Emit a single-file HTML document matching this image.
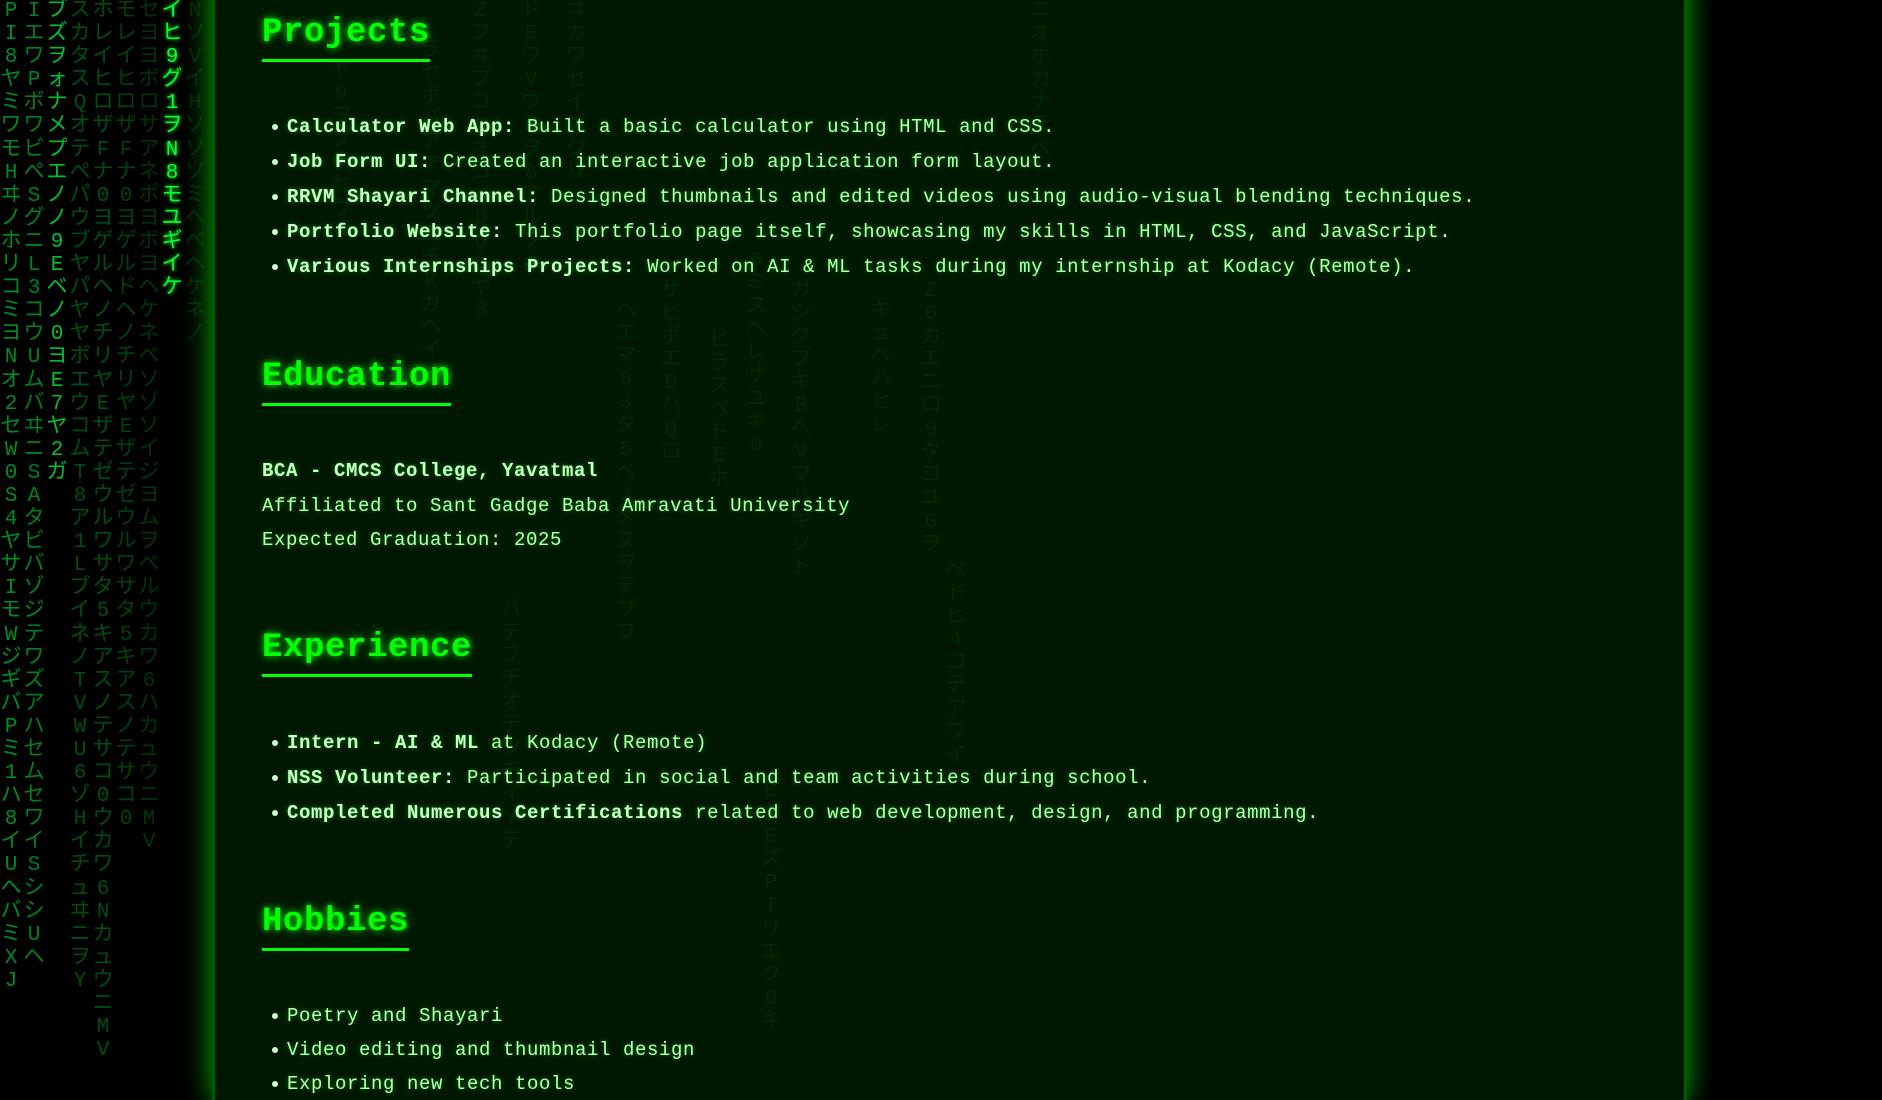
<!DOCTYPE html>
<html><head><meta charset="utf-8">
<style>
html,body{margin:0;padding:0;background:#000;width:1882px;height:1079px;overflow:hidden}
.rain{position:absolute;top:0;left:0;width:1882px;height:1079px;font-family:"Liberation Mono","Noto Sans CJK JP",monospace;font-size:21px;line-height:23.1px;color:#00ff41;}
.col{position:absolute;top:0;width:22px;word-break:break-all;white-space:normal;text-align:center}
.box{position:absolute;left:212px;top:-20px;width:1475px;height:1120px;background:rgba(0,24,0,0.95);box-shadow:0 0 26px #00b300;}
.box:before{content:"";position:absolute;left:0;top:0;bottom:0;width:3px;background:#005a00}
.box:after{content:"";position:absolute;right:0;top:0;bottom:0;width:3px;background:#005a00}
.content{position:absolute;left:262px;top:0;font-family:"Liberation Mono",monospace;color:#b8ffb8;font-size:19px;letter-spacing:0.6px}
h2{position:absolute;margin:0;font-size:34px;color:#00ff00;text-shadow:0 0 8px #00ff00;font-weight:bold;border-bottom:3px solid #00ff00;padding-bottom:8px;line-height:36px;letter-spacing:0.6px;white-space:nowrap}
.li{position:absolute;left:0;white-space:nowrap;text-shadow:0 0 4px rgba(0,255,0,.5)}
.li b{color:#ccffcc}
.dot{position:absolute;left:10px;width:6px;height:6px;border-radius:50%;background:#ccffcc}
.li span.t{position:absolute;left:25px;white-space:nowrap}
</style></head><body>
<div class="rain">
<div class="col" style="left:0;opacity:.55">PI8ヤミワモHヰノホリコミヨNオ2セW0S4ヤサIモWジギバPミ1ハ8イUヘバミXJ</div>
<div class="col" style="left:23px;opacity:.5">Iエワ PボワビペSグニL3コウUムバヰニSAタビバゾジテワズアハセムセワイSシシUヘ</div>
<div class="col" style="left:46px;opacity:.75">ブズヲォナメプエノノ9Eベノ0ヨE7ヤ2ガ</div>
<div class="col" style="left:69px;opacity:.3">スカタスQオテペパウブヤパヤヤボエウコ ムT8ア1LブイネノTVWU6ゾHイチュヰニヲY</div>
<div class="col" style="left:92px;opacity:.3">ホレイヒロザFナ0ヨゲルヘノチリヤEザテゼウルワサタ5キアスノテサコ0ウカワ6NカュウニMV</div>
<div class="col" style="left:115px;opacity:.25">モレイヒロザFナ0ヨゲルドヘノチリヤEザテゼウルワサタ5キアスノテサコ0</div>
<div class="col" style="left:138px;opacity:.2">セヨヨボロサアネポヨボヨヘケネベソゾソイジヨムヲベルウカワ6ハカュウニMV</div>
<div class="col" style="left:161px;opacity:1;text-shadow:0 0 4px #0f0">イヒ9グ1ヲN8モユギイケ</div>
<div class="col" style="left:184px;opacity:.15">NソVイHソソソミヘベヘケネノ</div>
</div>
<div class="box"></div>
<div class="rain" style="opacity:.08">
<div class="col" style="left:420px;top:40px">ラセボバアアマツムチKガヘイ</div>
<div class="col" style="left:470px;top:0">ZブヰプコヘオコイDQムヤ8</div>
<div class="col" style="left:520px;top:0">ドEワVウミヲ8アルフキ</div>
<div class="col" style="left:565px;top:0">ヰカワセイズジリ</div>
<div class="col" style="left:615px;top:300px">ヘエマ83タ5ベ3メヌヲテプフ</div>
<div class="col" style="left:660px;top:280px">ザビポエDハQロ</div>
<div class="col" style="left:708px;top:330px">ヒラスペドEホ</div>
<div class="col" style="left:745px;top:250px">6ミスヘレザユキ9</div>
<div class="col" style="left:790px;top:280px">ガシグブキBヘVマハキソト</div>
<div class="col" style="left:870px;top:300px">キュベハヒレ</div>
<div class="col" style="left:920px;top:280px">Z6カエニロ9タコユGヲ</div>
<div class="col" style="left:945px;top:560px">ベドヒ4コデアワイ</div>
<div class="col" style="left:500px;top:600px">パテフチオデツチイYテ</div>
<div class="col" style="left:760px;top:780px">BボEズPTリエクBキ</div>
<div class="col" style="left:330px;top:60px">ヤ9ヲプテセウ</div>
<div class="col" style="left:1030px;top:0">ニオホカナテベ</div>
</div>
<div class="content">
<h2 style="top:15px">Projects</h2>
<div class="li" style="top:116px"><i class="dot" style="top:8px"></i><span class="t"><b>Calculator Web App:</b> Built a basic calculator using HTML and CSS.</span></div>
<div class="li" style="top:151px"><i class="dot" style="top:8px"></i><span class="t"><b>Job Form UI:</b> Created an interactive job application form layout.</span></div>
<div class="li" style="top:186px"><i class="dot" style="top:8px"></i><span class="t"><b>RRVM Shayari Channel:</b> Designed thumbnails and edited videos using audio-visual blending techniques.</span></div>
<div class="li" style="top:221px"><i class="dot" style="top:8px"></i><span class="t"><b>Portfolio Website:</b> This portfolio page itself, showcasing my skills in HTML, CSS, and JavaScript.</span></div>
<div class="li" style="top:256px"><i class="dot" style="top:8px"></i><span class="t"><b>Various Internships Projects:</b> Worked on AI &amp; ML tasks during my internship at Kodacy (Remote).</span></div>

<h2 style="top:359px">Education</h2>
<div class="li" style="top:460px"><b>BCA - CMCS College, Yavatmal</b></div>
<div class="li" style="top:495px">Affiliated to Sant Gadge Baba Amravati University</div>
<div class="li" style="top:529px">Expected Graduation: 2025</div>

<h2 style="top:630px">Experience</h2>
<div class="li" style="top:732px"><i class="dot" style="top:8px"></i><span class="t"><b>Intern - AI &amp; ML</b> at Kodacy (Remote)</span></div>
<div class="li" style="top:767px"><i class="dot" style="top:8px"></i><span class="t"><b>NSS Volunteer:</b> Participated in social and team activities during school.</span></div>
<div class="li" style="top:802px"><i class="dot" style="top:8px"></i><span class="t"><b>Completed Numerous Certifications</b> related to web development, design, and programming.</span></div>

<h2 style="top:904px">Hobbies</h2>
<div class="li" style="top:1005px"><i class="dot" style="top:8px"></i><span class="t">Poetry and Shayari</span></div>
<div class="li" style="top:1039px"><i class="dot" style="top:8px"></i><span class="t">Video editing and thumbnail design</span></div>
<div class="li" style="top:1073px"><i class="dot" style="top:8px"></i><span class="t">Exploring new tech tools</span></div>
</div>
</body></html>
